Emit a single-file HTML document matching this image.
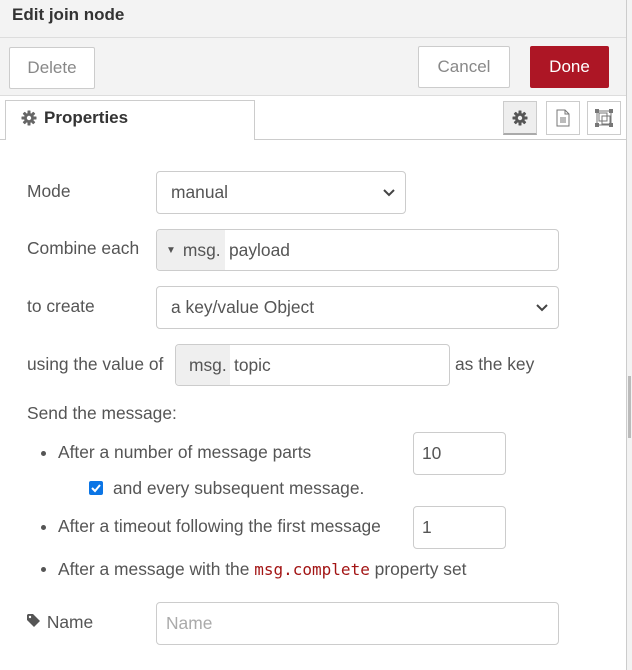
<!DOCTYPE html>
<html><head><style>
*{box-sizing:border-box;margin:0;padding:0}
body{width:632px;height:670px;position:relative;overflow:hidden;background:#fff;font-family:"Liberation Sans",Arial,sans-serif;font-size:17.4px;color:#555}
.a{position:absolute;white-space:nowrap}
.btn{position:absolute;border:1px solid #ccc;background:#fff;color:#888;font-size:17px;display:flex;align-items:center;justify-content:center;border-radius:2px}
.inp{position:absolute;border:1px solid #ccc;border-radius:4px;background:#fff;display:flex;align-items:center;color:#555}
.pre{background:#efefef;height:100%;display:flex;align-items:center;border-radius:4px 0 0 4px}
.chev{position:absolute;right:10px;top:50%;margin-top:-4px}
.ib{position:absolute;top:101px;width:34px;height:34px;border:1px solid #ccc;background:#fff;display:flex;align-items:center;justify-content:center}
.dot{position:absolute;left:41px;width:5px;height:5px;border-radius:50%;background:#555}
</style></head><body>
<div class="a" style="left:0;top:0;width:626px;height:96px;background:#f3f3f3;border-bottom:1px solid #ddd"></div>
<div class="a" style="left:0;top:37px;width:626px;height:1px;background:#ddd"></div>
<div class="a" style="left:12px;top:5px;font-size:17px;font-weight:bold;color:#333">Edit join node</div>
<div class="btn" style="left:9px;top:47px;width:86px;height:42px">Delete</div>
<div class="btn" style="left:418px;top:46px;width:92px;height:42px">Cancel</div>
<div class="btn" style="left:530px;top:46px;width:79px;height:42px;background:#ad1625;border-color:#ad1625;color:#fff">Done</div>
<div class="a" style="left:0;top:139px;width:626px;height:1px;background:#ccc"></div>
<div class="a" style="left:5px;top:100px;width:250px;height:40px;background:#fff;border:1px solid #ccc;border-bottom:none"></div>
<div class="a" style="left:21px;top:110px;width:16px;height:16px"><svg width="16" height="16" viewBox="0 0 16 16"><g fill="#666"><circle cx="8" cy="8" r="5"/><rect x="6.5" y="0.5" width="3" height="15" rx="0.5"/><rect x="0.5" y="6.5" width="15" height="3" rx="0.5"/><rect x="6.5" y="0.5" width="3" height="15" rx="0.5" transform="rotate(45 8 8)"/><rect x="6.5" y="0.5" width="3" height="15" rx="0.5" transform="rotate(-45 8 8)"/></g><circle cx="8" cy="8" r="2.2" fill="#fff"/></svg></div>
<div class="a" style="left:44px;top:108px;font-size:17px;font-weight:bold;color:#333">Properties</div>
<div class="ib" style="left:503px;background:#eee;border-bottom:2px solid #aaa"><svg width="16" height="16" viewBox="0 0 16 16"><g fill="#555"><circle cx="8" cy="8" r="5"/><rect x="6.5" y="0.5" width="3" height="15" rx="0.5"/><rect x="0.5" y="6.5" width="15" height="3" rx="0.5"/><rect x="6.5" y="0.5" width="3" height="15" rx="0.5" transform="rotate(45 8 8)"/><rect x="6.5" y="0.5" width="3" height="15" rx="0.5" transform="rotate(-45 8 8)"/></g><circle cx="8" cy="8" r="2.2" fill="#eee"/></svg></div>
<div class="ib" style="left:546px"><svg width="16" height="18" viewBox="0 0 16 18"><path d="M2 1h8l4 4v12H2z M10 1v4h4" fill="none" stroke="#777"/><path d="M5 9h6M5 11h6M5 13h6" stroke="#777"/></svg></div>
<div class="ib" style="left:587px"><svg width="20" height="20" viewBox="0 0 20 20"><rect x="3" y="3" width="14" height="14" fill="none" stroke="#777"/><rect x="5" y="5" width="8" height="8" fill="none" stroke="#777"/><rect x="8" y="8" width="8" height="8" fill="none" stroke="#777"/><rect x="1" y="1" width="4" height="4" fill="#777"/><rect x="15" y="1" width="4" height="4" fill="#777"/><rect x="1" y="15" width="4" height="4" fill="#777"/><rect x="15" y="15" width="4" height="4" fill="#777"/></svg></div>
<div class="a" style="left:626px;top:0;width:1px;height:670px;background:#ccc"></div>
<div class="a" style="left:627px;top:0;width:5px;height:670px;background:#f3f3f3"></div>
<div class="a" style="left:628px;top:376px;width:3px;height:62px;background:#bbb"></div>

<div class="a" style="left:27px;top:181px">Mode</div>
<div class="inp" style="left:156px;top:171px;width:250px;height:43px;padding-left:14px">manual<svg class="chev" width="12" height="8"><path d="M1 1l5 5 5-5" fill="none" stroke="#444" stroke-width="2"/></svg></div>
<div class="a" style="left:27px;top:238px">Combine each</div>
<div class="inp" style="left:156px;top:229px;width:403px;height:42px"><div class="pre" style="width:68px;padding-left:9px"><span style="font-size:10px;margin-right:7px">▼</span>msg.</div><span style="margin-left:4px">payload</span></div>
<div class="a" style="left:27px;top:296px">to create</div>
<div class="inp" style="left:156px;top:286px;width:403px;height:43px;padding-left:14px">a key/value Object<svg class="chev" width="12" height="8"><path d="M1 1l5 5 5-5" fill="none" stroke="#444" stroke-width="2"/></svg></div>
<div class="a" style="left:27px;top:354px">using the value of</div>
<div class="inp" style="left:175px;top:344px;width:275px;height:42px"><div class="pre" style="width:54px;padding-left:13px">msg.</div><span style="margin-left:4px">topic</span></div>
<div class="a" style="left:455px;top:354px">as the key</div>
<div class="a" style="left:27px;top:403px">Send the message:</div>
<div class="dot" style="top:451px"></div>
<div class="a" style="left:58px;top:442px">After a number of message parts</div>
<div class="inp" style="left:413px;top:432px;width:93px;height:43px;padding-left:8px">10</div>
<div class="a" style="left:89px;top:481px;width:14px;height:14px;background:#0b75e5;border-radius:2px"><svg width="14" height="14" style="display:block"><path d="M3 7l3 3 5-6" fill="none" stroke="#fff" stroke-width="2"/></svg></div>
<div class="a" style="left:113px;top:478px">and every subsequent message.</div>
<div class="dot" style="top:525px"></div>
<div class="a" style="left:58px;top:516px">After a timeout following the first message</div>
<div class="inp" style="left:413px;top:506px;width:93px;height:43px;padding-left:8px">1</div>
<div class="dot" style="top:567px"></div>
<div class="a" style="left:58px;top:559px">After a message with the <span style="font-family:'DejaVu Sans Mono','Liberation Mono',monospace;font-size:16px;color:#a31515">msg.complete</span> property set</div>
<div class="a" style="left:27px;top:612px"><svg width="15" height="15" viewBox="0 0 15 15" style="vertical-align:-1px"><path d="M0 1v5l7 7 6-6-7-7H1z" fill="#555"/><circle cx="3" cy="3" r="1.2" fill="#fff"/></svg> Name</div>
<div class="inp" style="left:156px;top:602px;width:403px;height:43px;padding-left:9px;color:#aaa">Name</div>
</body></html>
